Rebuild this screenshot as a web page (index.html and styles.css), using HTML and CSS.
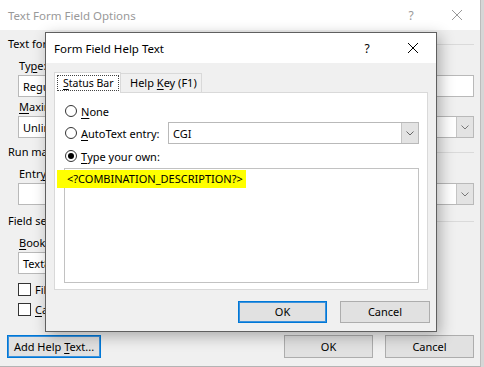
FILE: index.html
```html
<!DOCTYPE html>
<html lang="en">
  <head>
    <meta charset="UTF-8" />
    <meta name="viewport" content="width=device-width, initial-scale=1.0" />
    <title>Text Form Field Options</title>
    <link rel="stylesheet" href="styles.css">
  </head>
  <body>
    <div class="desk">
      <!-- parent dialog (inactive) -->
      <div class="dlg back">
        <div class="titlebar">
          <span class="title">Text Form Field Options</span>
          <span class="tb-btn">?</span>
          <span class="tb-btn">
            <svg width="10" height="10" viewBox="0 0 10 10"><path d="M0 0L10 10M10 0L0 10" stroke="#999" stroke-width="1"/></svg>
          </span>
        </div>
        <div class="content">
          <div class="group g1">
            <div class="group-head"><span>Text form field</span></div>
            <div class="cols">
              <div class="field">
                <div class="lbl">Ty<u>p</u>e:</div>
                <div class="combo"><span class="val">Regular text</span><span class="drop"><svg width="8" height="5" viewBox="0 0 8 5"><path d="M0.5 0.5L4 4L7.5 0.5" fill="none" stroke="#777"/></svg></span></div>
              </div>
              <div class="field">
                <div class="lbl"><u>D</u>efault text:</div>
                <div class="edit"></div>
              </div>
              <div class="field">
                <div class="lbl"><u>M</u>aximum length:</div>
                <div class="edit"><span class="val">Unlimited</span></div>
              </div>
              <div class="field">
                <div class="lbl">Text <u>f</u>ormat:</div>
                <div class="combo"><span class="val"></span><span class="drop"><svg width="8" height="5" viewBox="0 0 8 5"><path d="M0.5 0.5L4 4L7.5 0.5" fill="none" stroke="#777"/></svg></span></div>
              </div>
            </div>
          </div>

          <div class="group g2">
            <div class="group-head"><span>Run macro on</span></div>
            <div class="cols">
              <div class="field">
                <div class="lbl">Entr<u>y</u>:</div>
                <div class="combo"><span class="val"></span><span class="drop"><svg width="8" height="5" viewBox="0 0 8 5"><path d="M0.5 0.5L4 4L7.5 0.5" fill="none" stroke="#777"/></svg></span></div>
              </div>
              <div class="field">
                <div class="lbl">E<u>x</u>it:</div>
                <div class="combo"><span class="val"></span><span class="drop"><svg width="8" height="5" viewBox="0 0 8 5"><path d="M0.5 0.5L4 4L7.5 0.5" fill="none" stroke="#777"/></svg></span></div>
              </div>
            </div>
          </div>

          <div class="group g3">
            <div class="group-head"><span>Field settings</span></div>
            <div class="cols">
              <div class="field">
                <div class="lbl"><u>B</u>ookmark:</div>
                <div class="edit"><span class="val">Text8</span></div>
              </div>
            </div>
            <div class="checks">
              <div class="check"><span class="cb"></span>Fill-in enab<u>l</u>ed</div>
              <div class="check"><span class="cb"></span><u>C</u>alculate on exit</div>
            </div>
          </div>
        </div>
        <div class="footer">
          <div class="btn def wide">Add Help <u>T</u>ext...</div>
          <div class="spacer"></div>
          <div class="btn">OK</div>
          <div class="btn">Cancel</div>
        </div>
      </div>

      <!-- child dialog on top -->
      <div class="dlg fg">
        <div class="titlebar">
          <span class="title">Form Field Help Text</span>
          <span class="tb-btn">?</span>
          <span class="tb-btn">
            <svg width="10" height="10" viewBox="0 0 10 10"><path d="M0 0L10 10M10 0L0 10" stroke="#000" stroke-width="1"/></svg>
          </span>
        </div>
        <div class="fg-body">
          <div class="tabs">
            <div class="tab active"><span class="focus"><u>S</u>tatus Bar</span></div>
            <div class="tab">Help <u>K</u>ey (F1)</div>
          </div>
          <div class="panel">
            <div class="opt"><span class="rb"></span><u>N</u>one</div>
            <div class="opt auto">
              <span class="rb"></span><u>A</u>utoText entry:
              <div class="combo cgi"><span class="val">CGI</span><span class="drop"><svg width="8" height="5" viewBox="0 0 8 5"><path d="M0.5 0.5L4 4L7.5 0.5" fill="none" stroke="#666"/></svg></span></div>
            </div>
            <div class="opt own"><span class="rb on"></span><u>T</u>ype your own:</div>
            <div class="memo"><span class="hl">&lt;?COMBINATION_DESCRIPTION?&gt;</span></div>
          </div>
          <div class="actions">
            <div class="btn def">OK</div>
            <div class="btn">Cancel</div>
          </div>
        </div>
      </div>
    </div>
  </body>
</html>
```

FILE: styles.css
```css
* {
    box-sizing: border-box;
}
html, body {
    margin: 0;
}
body {
    width: 484px;
    height: 367px;
    overflow: hidden;
    background: #d6d6d6;
    font-family: "Noto Sans", sans-serif;
    font-size: 11px;
    color: #000;
    white-space: nowrap;
}
u {
    text-decoration-thickness: 1px;
    text-underline-offset: 2px;
}
.desk {
    position: relative;
    width: 484px;
    height: 367px;
}
.dlg {
    background: #f0f0f0;
    display: flex;
    flex-direction: column;
}
.back {
    width: 481px;
    height: 367px;
    border-right: 1px solid #bcbcbc;
    border-bottom: 1px solid #b4b4b4;
}
.titlebar {
    flex: none;
    height: 30px;
    background: #fff;
    display: flex;
    align-items: center;
    font-size: 12px;
}
.title {
    flex: 1;
    padding-left: 8px;
    font-size: 11.5px;
}
.back .titlebar {
    color: #999;
}
.tb-btn {
    width: 46px;
    height: 30px;
    display: flex;
    align-items: center;
    justify-content: center;
}

/* parent dialog body */
.content {
    padding: 4px 6px 0 8px;
}
.group-head {
    height: 20px;
    line-height: 20px;
    display: flex;
    align-items: center;
    margin-bottom: 2px;
}
.group-head::after {
    content: "";
    flex: 1;
    height: 1px;
    margin-left: 6px;
    background: #dadada;
}
.g2 {
    margin-top: 4px;
}
.g3 {
    margin-top: 6px;
}
.cols {
    display: grid;
    grid-template-columns: 1fr 1fr;
    column-gap: 20px;
    padding-left: 10px;
}
.lbl {
    height: 19px;
    line-height: 19px;
    padding-left: 1px;
}
.edit, .combo {
    height: 22px;
    background: #fff;
    border: 1px solid #b9b9b9;
    display: flex;
    align-items: center;
}
.val {
    flex: 1;
    padding-left: 4px;
    overflow: hidden;
}
.drop {
    width: 17px;
    height: 100%;
    background: #e3e3e3;
    border-left: 1px solid #c4c4c4;
    display: flex;
    align-items: center;
    justify-content: center;
}
.checks {
    padding-left: 10px;
    margin-top: 5px;
}
.check {
    height: 20px;
    display: flex;
    align-items: center;
}
.cb {
    width: 13px;
    height: 13px;
    border: 1px solid #333;
    background: #fff;
    margin-right: 4px;
}
.footer {
    margin-top: auto;
    display: flex;
    gap: 12px;
    padding: 0 6px 8px 7px;
}
.spacer {
    flex: 1;
}
.btn {
    width: 89px;
    height: 23px;
    line-height: 21px;
    text-align: center;
    background: #e1e1e1;
    border: 1px solid #adadad;
}
.btn.wide {
    width: 94px;
}
.btn.def {
    border-color: #0078d7;
    box-shadow: inset 0 0 0 1px #3c92dc;
}

/* child dialog */
.fg {
    position: absolute;
    left: 45px;
    top: 32px;
    width: 392px;
    height: 300px;
    border: 1px solid #5f5f5f;
    box-shadow: 3px 4px 14px rgba(0, 0, 0, 0.3);
}
.fg-body {
    flex: 1;
    display: flex;
    flex-direction: column;
    padding: 9px 8px 8px 8px;
}
.tabs {
    display: flex;
    height: 21px;
}
.tab {
    height: 20px;
    margin-top: 1px;
    width: 81px;
    padding-left: 9px;
    line-height: 18px;
    border: 1px solid #d9d9d9;
    border-left: none;
    border-bottom: none;
    background: #f0f0f0;
}
.tab.active {
    position: relative;
    z-index: 1;
    width: 67px;
    height: 21px;
    margin-top: 0;
    padding: 2px 1px 2px 2px;
    border-left: 1px solid #d9d9d9;
    background: #fff;
    display: flex;
}
.focus {
    flex: 1;
    height: 16px;
    line-height: 14px;
    border: 1px dotted #444;
    padding-left: 5px;
    font-size: 10.5px;
}
.panel {
    flex: none;
    height: 198px;
    margin-top: -1px;
    background: #fff;
    border: 1px solid #d9d9d9;
    padding: 8px 8px 6px 9px;
}
.opt {
    height: 20px;
    display: flex;
    align-items: center;
}
.opt.auto {
    height: 22px;
    margin-top: 1px;
}
.opt.own {
    margin-top: 2px;
}
.rb {
    width: 12px;
    height: 12px;
    border: 1px solid #333;
    border-radius: 50%;
    background: #fff;
    margin: 0 4px 0 1px;
    display: flex;
    align-items: center;
    justify-content: center;
}
.rb.on::after {
    content: "";
    width: 6px;
    height: 6px;
    border-radius: 50%;
    background: #000;
}
.combo.cgi {
    width: 251px;
    margin-left: auto;
}
.memo {
    height: 115px;
    margin-top: 2px;
    border: 1px solid #c2c2c2;
    background: #fff;
    padding: 1px 2px;
    line-height: 18px;
}
.hl {
    display: inline-block;
    margin-left: -10px;
    padding: 0 3px 0 10px;
    background: #ffff00;
}
.actions {
    display: flex;
    justify-content: flex-end;
    gap: 13px;
    margin: 11px -2px 0 0;
}
.actions .btn {
    height: 22px;
    line-height: 20px;
}
.actions .btn + .btn {
    width: 90px;
}
```
